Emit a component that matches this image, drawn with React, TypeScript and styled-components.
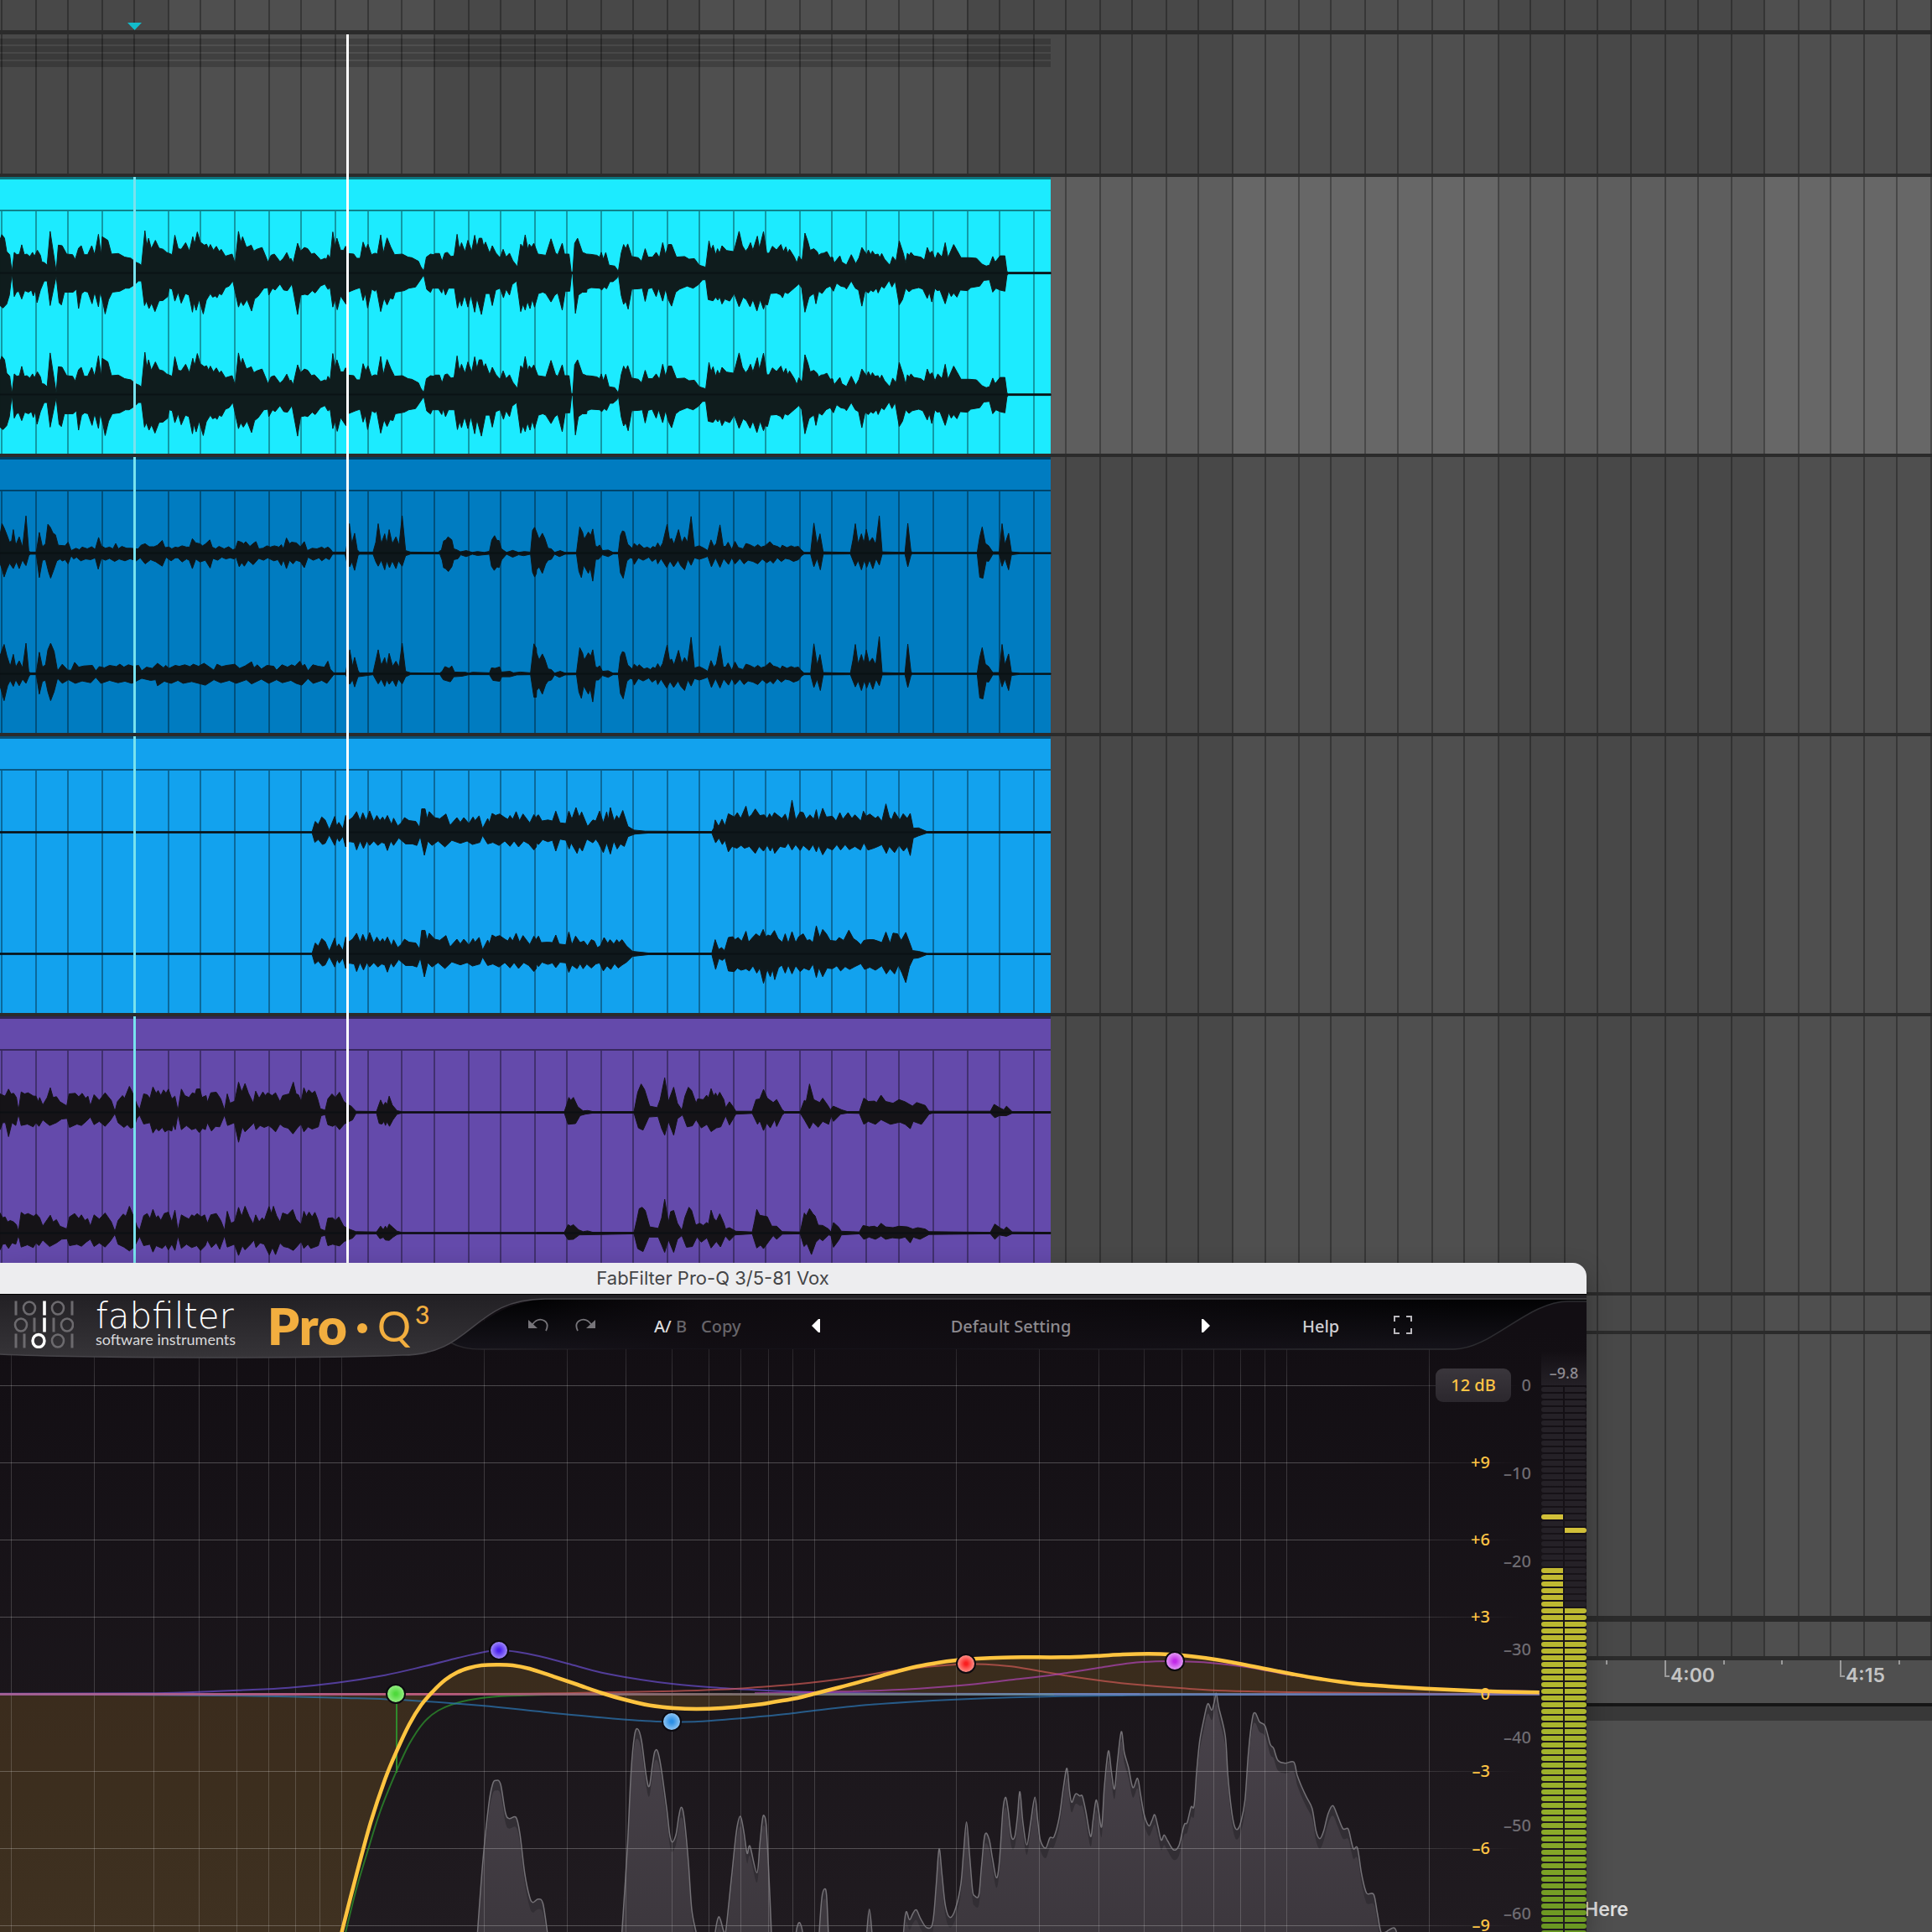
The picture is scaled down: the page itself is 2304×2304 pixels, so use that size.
import React from "react";
import styled, { createGlobalStyle } from "styled-components";

/* ---------- shared drawing helpers ---------- */

type Scale = { x0: number; sx: number; y0: number; sy: number };
type Pt = [number, number];

const parse = (text: string, s: Scale): Pt[] =>
  text
    .trim()
    .split(/\s*,\s*/)
    .map((pair) => {
      const [x, y] = pair.split(" ").map(Number);
      return [s.x0 + x / s.sx, (y - s.y0) / s.sy] as Pt;
    });

const fmt = (p: Pt) => `${p[0].toFixed(1)} ${p[1].toFixed(1)}`;
const line = (pts: Pt[]) => "M" + pts.map(fmt).join("L");

/* Catmull-Rom spline through the points */
const spline = (pts: Pt[]) => {
  let d = `M${fmt(pts[0])}`;
  for (let i = 0; i < pts.length - 1; i++) {
    const a = pts[Math.max(0, i - 1)];
    const b = pts[i];
    const c = pts[i + 1];
    const e = pts[Math.min(pts.length - 1, i + 2)];
    const c1: Pt = [b[0] + (c[0] - a[0]) / 6, b[1] + (c[1] - a[1]) / 6];
    const c2: Pt = [c[0] - (e[0] - b[0]) / 6, c[1] - (e[1] - b[1]) / 6];
    d += `C${fmt(c1)} ${fmt(c2)} ${fmt(c)}`;
  }
  return d;
};

type Piece = { scale: Scale; top: string; bottom: string };
const outline = (pieces: Piece[]) => {
  const top = pieces.flatMap((p) => parse(p.top, p.scale));
  const bottom = pieces.flatMap((p) => parse(p.bottom, p.scale)).reverse();
  return line([...top, ...bottom]) + "Z";
};

/* ---------- waveform data ---------- */

const leadVox: Piece[] = [
  {
    scale: { x0: 0, sx: 2.24, y0: 911, sy: 2.8 },
    top: "0 800,5 783,12 795,18 840,26 850,32 908,38 842,45 850,52 848,58 817,65 850,72 848,80 856,87 842,92 855,100 835,108 852,112 875,118 876,126 885,134 772,150 905,156 818,166 820,178 848,194 850,201 866,210 828,217 820,225 850,234 850,245 820,253 850,263 782,270 850,273 790,288 802,298 848,316 846,333 858,350 862,362 875,372 880,378 886,387 770,392 820,397 795,404 830,415 802,425 828,436 832,445 842,460 850,467 785,476 830,484 832,496 810,506 838,515 790,520 815,527 774,535 808,546 818,552 815,557 830,562 816,570 835,578 822,586 840,591 832,602 855,620 848,628 880,637 772,643 810,648 790,658 825,665 822,671 818,678 838,686 832,700 826,708 850,716 875,724 852,733 848,748 873,757 862,766 843,774 866,777 862,783 878,795 812,803 838,813 826,822 830,832 848,840 845,857 868,868 862,872 866,876 850,882 862,889 774,895 822,900 795,910 835,918 835,923 822,930 846,945 848,953 862,962 862,970 808,977 832,983 815,992 850,1002 845,1008 848,1017 784,1024 845,1034 794,1044 825,1054 850,1075 848,1090 858,1100 860,1118 872,1124 890,1132 904,1139 858,1150 848,1158 850,1163 846,1174 846,1181 872,1188 845,1195 842,1205 856,1213 854,1221 782,1227 832,1233 810,1242 840,1250 802,1260 838,1268 785,1274 825,1280 795,1287 795,1292 822,1297 808,1308 845,1315 820,1325 845,1336 860,1344 832,1352 858,1361 845,1370 870,1382 890,1391 815,1397 825,1403 784,1410 832,1414 815,1420 825,1426 812,1437 848,1458 852,1472 797,1484 845,1490 850,1502 812,1508 848,1520 848,1526 908,1530 908,1535 812,1543 795,1556 842,1567 848",
    bottom: "0 1020,8 1028,18 1015,25 985,32 914,38 990,44 975,50 972,58 998,66 970,76 975,84 968,89 988,94 968,99 1010,108 968,118 938,126 938,134 1020,150 922,158 1010,164 1018,172 975,195 975,204 965,210 1030,218 980,226 972,235 975,246 1014,253 975,263 1024,268 975,275 1010,281 1048,290 1000,300 975,320 972,335 962,345 962,360 950,370 938,378 938,386 1020,391 1005,398 1030,405 1012,414 1040,425 1004,435 1003,448 990,452 962,460 965,467 1005,476 975,484 1012,495 980,505 985,514 1042,518 1010,524 1036,532 1000,543 1048,551 1002,562 980,568 992,575 988,580 994,585 980,592 984,602 960,612 955,622 938,637 1025,643 1005,650 1020,660 1000,672 1038,680 998,690 988,705 962,716 960,718 985,728 962,735 968,748 948,758 968,768 970,780 948,795 1050,803 985,815 982,822 985,834 970,842 978,856 955,868 948,876 966,882 960,889 1025,895 1000,901 1034,910 988,924 1015,930 975,950 965,962 960,970 1003,976 980,982 1028,993 965,1002 972,1006 965,1017 1040,1026 995,1034 1018,1042 995,1050 998,1056 975,1080 970,1092 962,1110 958,1120 940,1132 918,1140 966,1150 976,1155 962,1172 962,1180 978,1184 960,1190 985,1198 962,1214 962,1222 1028,1228 1000,1233 1022,1241 985,1250 1025,1258 985,1268 1042,1274 995,1286 1050,1297 980,1308 980,1315 1020,1324 968,1336 962,1345 994,1352 965,1361 985,1368 950,1380 938,1391 1040,1397 1015,1403 1035,1409 1005,1416 1030,1422 998,1428 1025,1438 980,1450 975,1458 980,1472 1008,1482 985,1490 978,1502 1035,1510 972,1522 972,1527 914,1530 914,1537 1046,1545 985,1556 975,1567 975",
  },
  {
    scale: { x0: 640, sx: 2.063, y0: 351, sy: 2.8 },
    top: "124 288,134 289,148 292,155 298,159 282,164 305,170 283,178 325,192 328,201 345,208 285,214 256,219 270,224 254,234 296,250 300,258 312,267 270,274 298,285 298,294 282,302 300,310 250,317 290,324 256,332 256,344 298,364 296,375 305,388 303,400 325,416 332,424 244,429 275,434 258,440 290,445 270,450 285,456 260,467 276,485 280,498 212,506 260,514 278,520 268,526 250,532 275,543 228,548 268,558 213,566 285,572 285,580 262,590 274,601 256,607 280,613 264,618 285,622 272,634 298,640 318,645 295,653 310,660 218,667 245,673 275,682 270,690 280,694 292,700 286,706 285,714 280,722 300,728 298,732 318,746 294,751 315,762 324,774 290,785 320,793 300,800 266,812 290,816 274,822 290,826 278,832 290,840 288,844 300,849 286,856 305,869 325,876 296,884 312,892 244,902 285,908 318,912 285,917 292,921 282,928 294,945 298,954 308,961 266,967 285,973 278,980 305,987 282,997 298,1005 250,1012 300,1026 256,1034 275,1044 300,1065 300,1082 302,1096 322,1106 328,1114 325,1122 296,1128 315,1140 294,1152 294,1157 345,1160 349,1265 349",
    bottom: "124 405,134 400,155 402,160 408,166 398,172 404,180 380,188 380,198 368,201 355,208 425,214 456,219 445,225 472,234 405,250 404,260 402,267 446,274 404,284 400,294 430,300 402,310 445,317 405,324 440,332 462,342 415,352 405,370 395,385 402,398 390,408 374,416 374,422 440,434 444,440 432,446 442,450 430,456 455,463 438,475 445,486 420,498 464,508 432,516 440,525 464,532 440,542 478,550 440,558 472,562 455,568 458,575 420,590 418,600 424,605 434,610 415,618 420,635 400,645 388,652 400,660 482,670 432,676 425,682 420,687 454,694 412,702 420,712 402,722 395,730 412,738 385,748 395,758 398,762 405,774 378,784 402,792 408,800 462,808 410,816 418,822 408,828 414,836 402,840 418,848 395,855 402,867 376,874 398,882 378,892 458,900 440,908 402,916 414,924 405,940 400,950 405,961 436,966 415,972 448,980 402,985 410,992 408,1005 454,1014 412,1020 430,1026 418,1034 432,1042 408,1060 410,1068 400,1090 395,1100 376,1114 374,1122 415,1130 402,1140 408,1152 412,1157 360,1160 354,1265 354",
  },
];

const doublesTail: Piece = {
  scale: { x0: 640, sx: 2.063, y0: 1284, sy: 2.8 },
  top: "0 1215,6 1238,14 1218,20 1235,28 1268,36 1270,44 1282,58 1276,70 1282,98 1282,102 1240,106 1197,113 1215,117 1238,127 1214,133 1225,138 1204,145 1262,150 1263,155 1257,162 1276,176 1274,188 1282,201 1282,206 1225,211 1210,216 1213,224 1255,230 1262,235 1268,240 1252,248 1262,252 1254,264 1268,272 1264,280 1270,286 1262,292 1266,298 1250,304 1265,310 1250,321 1188,327 1240,332 1235,338 1255,349 1206,357 1250,364 1230,371 1248,380 1162,388 1265,400 1260,412 1268,421 1276,429 1240,436 1262,442 1252,451 1190,459 1262,465 1262,471 1248,480 1272,488 1245,496 1265,508 1270,515 1252,524 1256,536 1264,544 1256,552 1264,562 1260,574 1246,582 1258,592 1262,600 1268,604 1258,616 1266,626 1260,634 1264,644 1262,650 1272,658 1282,674 1282,682 1184,690 1255,697 1220,705 1280,772 1282,778 1240,784 1186,791 1252,799 1220,805 1250,811 1205,818 1248,826 1232,834 1255,843 1160,850 1280,906 1282,913 1185,921 1278,925 1282,1084 1282,1090 1230,1096 1197,1104 1252,1112 1260,1122 1280,1138 1280,1145 1186,1152 1255,1161 1218,1168 1280,1190 1283,1265 1283",
  bottom: "0 1340,6 1330,14 1352,22 1320,28 1308,36 1305,44 1288,56 1296,70 1288,98 1287,104 1345,110 1366,116 1325,127 1352,132 1335,138 1378,145 1305,152 1305,162 1290,176 1296,188 1287,201 1287,206 1350,213 1368,222 1310,230 1300,236 1302,240 1322,250 1300,262 1308,276 1298,284 1312,294 1302,298 1320,306 1302,320 1332,328 1310,337 1330,348 1308,354 1325,364 1340,372 1305,380 1325,388 1300,400 1305,412 1300,421 1295,430 1330,440 1300,451 1332,460 1302,472 1322,480 1300,488 1320,500 1302,510 1320,520 1308,532 1312,544 1320,555 1304,566 1316,575 1308,582 1318,592 1300,602 1312,612 1302,622 1305,632 1312,644 1306,652 1292,658 1287,674 1287,682 1330,690 1302,698 1340,705 1288,772 1287,784 1328,791 1308,799 1340,806 1308,812 1332,819 1306,827 1336,835 1302,843 1324,850 1288,906 1287,913 1330,921 1290,925 1286,1084 1286,1090 1365,1098 1368,1106 1310,1112 1312,1122 1288,1138 1288,1145 1328,1152 1302,1161 1340,1168 1290,1190 1286,1265 1286",
};

const doublesLeft: Piece[] = [
  {
    scale: { x0: 0, sx: 2.45, y0: 276, sy: 2.8 },
    top: "0 215,6 178,12 192,20 215,28 240,34 235,39 198,46 250,56 222,66 256,76 152,84 268,88 273,106 273,115 207,124 255,133 245,140 180,147 190,155 210,162 215,170 250,190 252,199 240,208 268,222 260,232 265,240 256,255 262,268 255,278 264,288 224,296 252,308 260,320 256,330 262,338 244,346 262,356 254,370 260,384 260,396 262,404 262,412 250,424 245,436 255,450 255,460 250,474 234,482 258,494 256,502 262,512 256,520 258,532 252,545 256,554 256,562 228,572 242,584 245,592 252,600 246,613 232,620 256,630 262,640 254,655 262,668 255,680 265,688 262,695 236,705 240,712 245,718 238,730 254,742 242,748 238,756 262,768 260,780 252,790 256,802 252,815 256,822 248,828 262,837 226,846 245,852 240,866 242,878 255,889 238,898 268,912 260,926 262,940 256,948 262,958 256,965 262,972 273,1010 273,1014 245,1021 178,1028 245,1036 210,1044 265,1050 273,1090 273,1098 240,1105 178,1114 245,1124 212,1130 245,1137 198,1146 245,1157 222,1166 250,1175 152,1185 268,1200 273,1280 274,1290 265,1296 236,1303 232,1309 222,1320 232,1326 262,1336 266,1345 272,1362 268,1380 274,1395 271,1415 274,1430 270,1437 232,1445 218,1452 234,1458 234,1465 262,1480 274,1498 267,1515 274,1532 271,1550 273,1556 200,1562 190,1567 205",
    bottom: "0 310,6 330,12 356,20 330,28 310,39 328,48 305,56 328,66 298,72 312,76 318,84 285,88 280,106 280,115 358,124 300,133 298,142 340,148 360,156 335,166 302,176 296,182 303,190 298,199 312,208 285,215 296,224 290,236 302,250 296,265 298,278 292,287 330,296 294,308 300,320 294,335 304,348 296,365 302,380 295,398 302,410 292,424 312,440 298,455 305,474 320,485 290,500 302,512 292,520 292,532 306,545 296,553 300,562 328,572 296,584 306,600 300,614 326,622 294,636 300,648 290,660 296,672 292,684 296,690 290,699 322,706 308,714 320,725 300,740 315,756 294,770 300,782 292,800 302,812 298,822 318,828 298,837 328,846 300,856 312,865 300,878 305,889 325,900 290,915 300,932 292,940 302,952 292,962 298,972 280,1008 280,1014 310,1022 322,1028 305,1036 334,1046 285,1050 280,1090 280,1098 305,1105 320,1114 300,1124 332,1130 302,1138 325,1146 302,1157 328,1164 302,1175 320,1185 285,1200 279,1285 279,1292 300,1296 325,1302 328,1310 338,1320 322,1326 298,1338 295,1346 282,1362 288,1380 280,1395 284,1430 280,1436 320,1444 334,1452 322,1458 325,1466 298,1480 280,1498 290,1515 282,1530 285,1550 280,1556 340,1562 356,1567 345",
  },
  doublesTail,
];

const doublesRight: Piece[] = [
  {
    scale: { x0: 0, sx: 2.45, y0: 680, sy: 2.8 },
    top: "0 620,12 582,20 620,30 655,39 615,46 658,56 637,66 660,76 578,84 672,88 677,106 677,115 608,124 658,133 650,140 600,148 578,158 605,168 670,182 648,198 668,208 668,218 642,230 658,245 654,270 652,280 670,290 656,305 660,320 652,340 656,350 648,362 658,375 650,390 655,405 652,414 670,428 658,445 662,460 645,478 660,484 652,494 662,512 652,524 655,540 650,555 656,565 648,580 655,596 645,610 656,625 668,634 648,648 656,662 652,676 650,686 648,700 662,716 654,735 640,742 660,752 650,764 664,780 652,800 655,808 668,824 650,840 658,852 650,862 655,876 638,884 655,890 648,900 670,914 650,930 655,948 658,958 638,965 665,975 677,1010 677,1022 600,1030 655,1036 625,1046 668,1050 677,1090 677,1105 600,1114 652,1124 626,1130 655,1137 612,1147 655,1157 638,1166 658,1175 578,1185 672,1200 677,1285 678,1292 672,1300 656,1312 662,1320 654,1328 674,1345 675,1360 675,1370 678,1380 675,1430 677,1436 660,1446 662,1460 657,1465 674,1490 672,1500 677,1520 674,1550 677,1560 580,1567 595",
    bottom: "0 720,12 770,22 720,30 702,39 722,46 700,56 720,66 698,76 712,84 690,88 683,106 683,115 748,124 705,133 702,140 740,148 770,158 740,168 695,182 712,200 700,220 712,240 704,265 710,280 692,295 712,320 702,345 710,365 705,385 712,414 695,440 702,455 700,460 720,480 705,500 712,520 702,535 712,560 706,580 712,600 718,625 700,645 710,670 702,690 712,720 700,735 714,764 698,785 712,808 700,825 710,850 702,865 712,882 718,900 696,915 712,940 702,955 712,975 683,1010 683,1022 715,1030 700,1036 724,1046 690,1090 683,1105 714,1114 698,1124 722,1130 700,1137 715,1147 700,1157 722,1164 698,1175 714,1185 690,1200 682,1285 682,1295 700,1316 707,1326 690,1350 688,1370 683,1430 683,1440 702,1460 705,1466 690,1490 690,1510 684,1550 683,1560 758,1567 758",
  },
  doublesTail,
];

const pads: Piece[] = [
  {
    scale: { x0: 0, sx: 2.45, y0: 1211, sy: 2.8 },
    top: "0 1209,912 1209,921 1175,930 1185,940 1160,950 1170,962 1202,978 1158,984 1190,990 1178,1002 1200,1010 1155,1020 1170,1030 1162,1042 1142,1052 1172,1060 1146,1070 1172,1080 1140,1092 1175,1101 1155,1110 1172,1118 1160,1124 1172,1132 1155,1144 1185,1150 1164,1162 1190,1172 1180,1182 1162,1195 1172,1215 1175,1226 1195,1232 1133,1242 1133,1248 1165,1254 1142,1270 1162,1285 1166,1303 1150,1315 1188,1335 1162,1345 1178,1355 1162,1370 1182,1382 1160,1388 1172,1400 1156,1410 1198,1425 1165,1430 1178,1438 1148,1448 1155,1460 1150,1475 1162,1484 1168,1490 1155,1498 1168,1508 1142,1518 1172,1528 1150,1548 1180,1560 1152,1567 1165",
    bottom: "0 1213,912 1213,920 1245,930 1235,942 1252,950 1248,962 1220,978 1255,985 1228,991 1242,1002 1225,1010 1260,1020 1242,1035 1245,1042 1270,1052 1240,1062 1265,1072 1240,1080 1255,1092 1240,1104 1255,1115 1245,1124 1248,1132 1272,1142 1240,1150 1255,1165 1230,1185 1250,1205 1250,1218 1255,1228 1225,1240 1288,1250 1240,1262 1255,1280 1240,1300 1260,1320 1238,1345 1248,1365 1240,1380 1252,1402 1245,1410 1222,1425 1250,1440 1245,1458 1255,1475 1240,1490 1258,1502 1240,1515 1260,1530 1240,1545 1250,1560 1270,1567 1260",
  },
  {
    scale: { x0: 640, sx: 2.24, y0: 306, sy: 2.306 },
    top: "0 262,5 258,14 275,30 272,42 275,51 248,62 280,78 282,86 248,94 270,105 238,114 265,120 250,136 290,150 272,158 275,168 248,178 280,187 250,191 272,197 238,207 275,214 260,220 270,230 246,244 290,260 300,290 303,468 304,473 295,477 272,486 290,495 270,503 288,512 255,528 264,536 252,545 268,559 234,566 265,574 258,584 242,596 260,608 258,616 268,622 255,628 265,635 252,655 268,664 256,672 278,682 218,692 272,704 250,712 252,720 270,730 258,740 270,747 244,753 275,764 240,774 264,790 262,800 275,810 252,818 270,832 252,842 268,850 258,866 275,873 248,880 262,890 256,905 268,912 262,922 276,933 228,942 264,948 272,956 250,970 272,979 255,990 268,998 254,1006 295,1020 294,1042 304,1373 304",
    bottom: "0 335,5 340,16 326,30 332,42 328,51 358,62 325,78 328,87 352,92 335,108 364,114 345,122 358,134 325,150 335,158 325,165 335,178 362,187 335,197 366,206 330,215 352,224 338,234 345,244 318,262 311,300 308,468 308,478 335,487 322,496 340,503 328,512 360,522 345,535 350,546 342,555 350,568 345,584 364,594 345,606 358,616 342,624 358,630 345,636 364,650 345,664 348,672 335,682 355,692 340,704 356,712 342,728 356,738 340,747 360,753 342,764 368,776 348,790 355,802 340,812 355,824 340,835 354,850 345,865 355,874 335,885 355,900 350,912 345,922 340,934 364,942 345,956 362,968 342,980 358,990 345,998 370,1006 322,1020 316,1042 308,1373 308",
  },
];

const padsRight: Piece[] = [
  pads[0],
  {
    scale: { x0: 640, sx: 2.24, y0: 637, sy: 2.306 },
    top: "0 595,5 588,12 606,30 605,42 606,51 585,60 610,78 612,86 577,94 612,104 588,116 606,126 602,136 615,146 598,154 602,162 620,170 615,180 592,190 608,196 598,206 610,214 598,220 606,228 598,240 615,256 630,300 635,468 635,477 598,486 625,494 620,502 628,512 592,524 590,530 598,538 592,548 602,559 575,566 605,574 595,586 582,596 590,605 570,612 590,618 585,625 588,635 573,645 595,656 605,664 582,672 608,682 576,692 606,700 590,712 582,722 600,730 598,738 606,747 560,756 592,764 570,774 582,784 600,800 602,808 592,820 600,834 572,846 595,856 602,866 612,874 600,886 598,900 598,912 602,922 606,933 577,944 608,952 580,964 582,974 600,986 578,996 605,1004 628,1020 630,1042 636,1373 636",
    bottom: "0 665,5 672,14 660,30 666,42 662,51 675,62 660,78 662,86 688,94 668,108 678,116 664,124 678,134 665,146 676,158 665,168 662,178 684,188 670,198 680,208 664,218 676,228 668,240 660,256 644,300 639,468 639,478 680,487 650,496 655,503 648,512 684,528 686,536 676,546 682,559 678,568 684,578 670,588 690,596 676,606 718,616 680,624 700,630 680,636 708,646 675,655 668,664 690,672 668,682 692,692 670,704 686,714 676,728 682,738 665,747 702,754 675,764 700,776 676,790 678,802 670,812 684,824 672,836 680,850 672,866 664,876 680,890 674,905 682,922 670,934 692,944 678,956 692,966 668,976 690,986 716,996 672,1006 650,1020 648,1042 639,1373 639",
  },
];

const adlibHead: Piece = {
  scale: { x0: 0, sx: 2.45, y0: 378, sy: 3 },
  top: "0 312,15 320,25 295,32 312,40 310,48 325,54 372,62 305,72 312,82 308,98 320,105 320,112 340,116 325,125 352,138 325,147 290,155 325,165 322,175 340,195 355,202 312,220 310,230 322,240 310,250 328,257 320,264 355,275 315,290 335,307 308,325 335,336 374,343 340,358 318,364 328,378 285,388 310,400 350,408 368,420 312,430 315,438 328,447 287,456 310,462 300,470 318,478 298,485 310,492 295,502 330,511 320,520 372,530 295,540 318,552 325,562 308,570 312,574 295,584 294,590 325,602 318,606 342,616 308,632 306,645 330,656 370,664 312,672 345,686 338,697 270,706 305,716 275,726 310,740 345,747 302,757 328,768 305,775 318,782 308,795 318,805 308,818 340,826 318,845 312,857 270,865 312,872 315,880 340,888 290,895 312,902 298,912 310,920 302,928 330,936 365,950 370,958 330,970 312,980 325,992 306,1004 338,1015 350,1025 355,1040 374,1100 375,1112 334,1120 355,1126 342,1131 350,1137 320,1146 352,1160 372,1175 376,1567 376",
  bottom: "0 440,8 415,16 415,25 465,35 415,46 425,54 385,62 425,80 420,97 430,105 415,114 428,125 405,145 425,165 415,180 402,196 400,203 432,225 420,238 425,252 410,264 395,275 422,290 410,307 428,322 408,336 382,345 415,362 432,372 422,382 435,392 430,400 400,408 388,420 420,438 415,447 452,456 435,464 445,474 432,482 448,492 440,502 445,506 420,512 440,520 385,530 440,545 425,560 440,572 435,582 450,592 435,600 440,606 415,618 445,630 428,642 430,656 388,665 425,685 415,697 485,708 430,716 448,732 428,742 415,748 440,760 425,772 432,785 425,795 435,805 448,818 420,828 430,842 435,856 455,870 432,880 420,888 448,900 430,912 438,930 430,938 390,950 386,958 422,972 428,980 422,992 440,1006 420,1018 412,1030 405,1040 382,1100 381,1108 418,1116 420,1122 410,1126 425,1131 412,1138 428,1148 405,1160 385,1175 380,1567 380",
};

const adlibsLeft: Piece[] = [
  adlibHead,
  {
    scale: { x0: 640, sx: 2.24, y0: 1075, sy: 2.306 },
    top: "0 1073,74 1073,80 1055,86 1034,91 1042,98 1034,110 1060,124 1071,136 1070,150 1073,260 1073,270 1020,279 997,288 1012,302 1058,322 1062,330 1040,342 980,352 1045,366 1006,376 1050,388 1068,396 1030,405 1006,414 1015,426 1050,430 1038,445 1040,454 1028,459 1035,466 1010,473 1030,478 1022,483 1032,489 1020,500 1040,505 1062,515 1046,525 1060,532 1072,576 1072,586 1040,596 1038,606 1012,616 1036,632 1048,641 1040,656 1068,662 1073,704 1073,715 1042,720 1045,729 997,740 1040,756 1048,764 1036,778 1056,785 1068,792 1058,815 1068,830 1073,862 1073,874 1036,886 1045,902 1044,908 1048,920 1028,932 1045,952 1050,968 1040,984 1046,1004 1058,1015 1048,1038 1056,1048 1072,1212 1072,1222 1053,1236 1062,1248 1068,1255 1058,1270 1073,1373 1073",
    bottom: "0 1077,74 1077,84 1108,104 1106,116 1084,130 1080,150 1077,260 1077,272 1118,284 1124,300 1088,324 1086,334 1120,342 1138,352 1100,366 1138,376 1092,390 1082,402 1115,416 1112,426 1095,440 1118,455 1108,466 1128,480 1118,492 1115,505 1085,515 1110,532 1080,576 1078,590 1108,596 1098,606 1125,615 1105,624 1118,636 1095,641 1114,656 1082,662 1077,704 1077,715 1095,729 1120,738 1102,752 1116,764 1100,780 1108,787 1085,793 1100,812 1080,830 1077,862 1078,874 1108,886 1100,905 1108,920 1095,945 1108,970 1102,984 1108,998 1120,1006 1100,1028 1108,1048 1080,1058 1077,1212 1077,1224 1090,1236 1084,1255 1084,1270 1077,1373 1077",
  },
];

const adlibsRight: Piece[] = [
  {
    scale: { x0: 0, sx: 2.45, y0: 810, sy: 3 },
    top: "0 738,8 755,15 752,22 770,30 765,40 770,48 780,54 804,62 736,72 745,82 740,98 750,106 742,116 755,125 785,138 762,147 746,155 770,165 762,175 785,195 795,203 752,218 740,230 758,238 745,248 765,256 758,264 785,275 745,290 760,307 738,325 770,336 804,345 765,360 742,368 750,378 714,390 750,400 785,408 800,420 748,430 740,438 758,447 725,456 755,462 748,470 765,480 740,492 735,502 770,511 728,520 800,530 745,540 752,552 760,560 745,568 750,576 740,588 752,598 745,606 775,616 745,632 740,645 765,656 800,664 732,675 775,686 768,697 718,706 750,716 714,728 750,740 778,747 745,757 770,766 755,772 765,786 715,793 740,799 714,808 748,818 770,826 738,840 745,855 726,865 760,880 780,888 732,895 752,903 735,912 752,920 736,928 760,936 795,950 802,958 757,972 755,980 765,990 752,1004 785,1018 795,1040 805,1100 806,1112 785,1120 798,1126 785,1131 795,1137 778,1148 790,1160 803,1175 808,1567 808",
    bottom: "0 870,8 850,16 848,25 865,35 845,46 850,54 818,62 860,80 852,97 862,105 845,114 855,125 835,145 858,165 845,180 832,196 830,203 855,225 850,238 857,252 842,264 832,275 858,290 845,307 860,322 840,336 815,345 850,362 860,378 874,392 860,408 822,420 855,438 850,447 878,456 855,474 865,484 852,492 870,502 850,511 872,520 820,530 865,545 850,560 862,575 855,586 872,600 855,606 835,618 862,632 845,642 868,656 820,664 860,685 850,697 890,708 855,716 870,732 850,742 835,748 862,760 845,772 850,787 888,796 862,805 887,818 845,828 858,842 862,857 872,870 855,880 840,888 865,900 850,908 865,930 855,938 822,950 818,958 855,972 850,992 856,1006 840,1030 828,1040 814,1100 813,1110 830,1120 825,1126 835,1137 836,1148 825,1160 815,1175 812,1567 812",
  },
  {
    scale: { x0: 640, sx: 2.24, y0: 1407, sy: 2.306 },
    top: "0 1405,74 1405,84 1384,91 1388,98 1384,112 1398,124 1403,136 1401,150 1405,260 1405,268 1370,274 1340,282 1336,290 1345,302 1390,325 1394,334 1365,342 1314,352 1378,358 1348,366 1345,376 1380,388 1400,396 1365,407 1336,414 1345,425 1385,436 1380,445 1386,454 1378,459 1382,466 1344,473 1366,480 1374,489 1354,500 1380,505 1396,515 1392,532 1402,576 1404,582 1375,588 1342,596 1358,616 1362,628 1388,641 1388,656 1403,704 1404,715 1352,720 1360,729 1340,738 1354,744 1360,752 1385,764 1386,780 1396,786 1404,793 1378,806 1390,814 1402,862 1404,872 1386,888 1390,902 1388,910 1392,920 1380,932 1390,952 1392,968 1388,990 1390,1005 1396,1018 1392,1038 1396,1048 1403,1212 1405,1224 1382,1240 1394,1248 1398,1255 1390,1270 1404,1373 1405",
    bottom: "0 1409,74 1409,84 1425,98 1424,114 1412,260 1409,270 1450,284 1458,300 1418,325 1418,334 1440,342 1460,352 1425,366 1460,376 1424,388 1414,400 1446,416 1444,428 1418,440 1432,455 1420,466 1448,480 1430,491 1445,504 1415,515 1428,530 1412,576 1409,588 1448,598 1440,606 1450,620 1430,632 1414,641 1424,656 1410,704 1409,714 1444,722 1436,734 1466,746 1432,756 1422,764 1428,780 1412,786 1414,793 1446,808 1425,814 1412,862 1409,874 1424,888 1418,905 1424,920 1415,932 1424,950 1420,970 1422,984 1418,998 1434,1006 1418,1024 1424,1048 1411,1212 1409,1224 1424,1236 1412,1255 1416,1270 1409,1373 1409",
  },
];

/* ---------- arrangement data ---------- */

const BEATS = [
  2, 43, 81, 122, 160, 201, 239, 280, 321, 359, 400, 439, 479, 518, 559, 597, 638, 676, 717, 755, 796, 834, 875, 913,
  954, 992, 1033, 1072, 1113, 1154, 1192, 1233, 1271, 1312, 1350, 1391, 1429, 1470, 1509, 1549, 1587, 1628, 1667, 1708,
  1746, 1787, 1825, 1866, 1905, 1945, 1986, 2025, 2065, 2104, 2145, 2183, 2223, 2262, 2303,
];
const LIGHT_BANDS: Pt[] = [
  [201, 518],
  [835, 1153],
  [1470, 1787],
  [2104, 2422],
];

type Track = { height: number; color: string; ink: string; active?: boolean; channels: Piece[][] };
const TRACKS: Track[] = [
  { height: 330, color: "#1cebff", ink: "#0f1c1d", active: true, channels: [leadVox, leadVox] },
  { height: 329, color: "#007cc1", ink: "#0e171b", channels: [doublesLeft, doublesRight] },
  { height: 330, color: "#12a2ee", ink: "#0f181c", channels: [pads, padsRight] },
  { height: 329, color: "#644aab", ink: "#151317", channels: [adlibsLeft, adlibsRight] },
];

/* ---------- arrangement styles ---------- */

const GlobalStyle = createGlobalStyle`
  * { box-sizing: border-box; }
  body { margin: 0; background: #4f4f4f; }
  button { font: inherit; color: inherit; background: none; border: 0; padding: 0; cursor: pointer; }
`;

const Desktop = styled.div`
  position: relative;
  min-height: 100vh;
  overflow: hidden;
  display: flex;
  flex-direction: column;
  background: #4f4f4f;
  font-family: Inter, "Liberation Sans", sans-serif;
`;

const Lane = styled.section<{ $height: number; $rule: number; $active?: boolean }>`
  position: relative;
  display: grid;
  grid-template-rows: minmax(0, 1fr);
  flex: none;
  height: ${(p) => p.$height + p.$rule}px;
  border-bottom: ${(p) => p.$rule}px solid #2b2b2b;
  background: ${(p) => (p.$active ? "#5e5e5e" : "#484848")};
  > * {
    grid-area: 1 / 1;
  }
`;

const LaneGrid = styled.svg`
  display: block;
  width: 100%;
  height: 100%;
  min-width: 0;
`;

const Clip = styled.article<{ $color: string }>`
  width: 1253px;
  min-height: 0;
  display: flex;
  flex-direction: column;
  background: ${(p) => p.$color};
`;

const ClipTitle = styled.header`
  flex: none;
  height: 41px;
  border-top: 3px solid rgba(0, 0, 0, 0.5);
  border-bottom: 2px solid rgba(0, 0, 0, 0.45);
`;

const ClipBody = styled.div`
  flex: 1;
  min-height: 0;
  display: grid;
  grid-template-rows: minmax(0, 1fr) minmax(0, 1fr);
  > svg:first-child {
    grid-area: 1 / 1 / 3 / 2;
  }
`;

const ClipGrid = styled.svg`
  width: 100%;
  height: 100%;
`;

const Channel = styled.svg<{ $row: number }>`
  grid-area: ${(p) => p.$row} / 1;
  width: 100%;
  height: 100%;
  overflow: visible;
`;

const Locator = styled.i`
  position: absolute;
  top: 0;
  bottom: 0;
  left: 159px;
  width: 3px;
  background: #78e2ee;
`;

const LocatorFlag = styled.svg`
  align-self: end;
  margin-left: 152px;
`;

const Envelopes = styled.div`
  width: 1253px;
  display: flex;
  flex-direction: column;
  gap: 2px;
  padding-top: 5px;
`;

const Envelope = styled.i`
  height: 7px;
  background: rgba(0, 0, 0, 0.19);
`;

const Playhead = styled.i`
  position: absolute;
  top: 41px;
  bottom: 0;
  left: 413px;
  width: 3px;
  background: #fff;
`;

const Ruler = styled.div`
  flex: none;
  display: flex;
  height: 55px;
  padding-left: 1776px;
  overflow: hidden;
  border-bottom: 4px solid #161616;
  background: #4f4f4f;
`;

const RulerCell = styled.div`
  flex: none;
  width: 209px;
  display: grid;
  > * {
    grid-area: 1 / 1;
  }
`;

const RulerLabel = styled.span`
  padding: 4px 0 0 7px;
  font-size: 23px;
  line-height: 28px;
  font-weight: 600;
  color: #c4c4c4;
`;

const Gutter = styled.div`
  flex: none;
  height: 17px;
  background: #383838;
`;

const DropArea = styled.footer`
  flex: 1;
  display: flex;
  align-items: flex-end;
  padding: 0 0 12px 1889px;
  font-size: 23px;
  line-height: 30px;
  font-weight: 600;
  color: #dedede;
`;

/* ---------- plugin window styles ---------- */

const Window = styled.section`
  position: absolute;
  left: 0;
  top: 1506px;
  bottom: 0;
  width: 1892px;
  display: flex;
  flex-direction: column;
  overflow: hidden;
  border-top-right-radius: 16px;
  background: #171318;
`;

const WindowShadow = styled.i`
  position: absolute;
  left: 0;
  top: 1506px;
  bottom: 0;
  width: 1892px;
  border-top-right-radius: 16px;
  box-shadow: 0 12px 30px rgba(0, 0, 0, 0.3);
`;

const TitleBar = styled.h1`
  flex: none;
  margin: 0;
  height: 38px;
  padding-right: 192px;
  border-bottom: 1px solid #000;
  background: #ededef;
  color: #454547;
  text-align: center;
  font-size: 22px;
  line-height: 36px;
  font-weight: 400;
`;

const Plugin = styled.div`
  flex: 1;
  min-height: 0;
  display: grid;
  font-family: "Noto Sans", "Open Sans", sans-serif;
  font-size: 20px;
  line-height: 24px;
  font-weight: 500;
  > * {
    grid-area: 1 / 1;
    min-height: 0;
  }
`;

const Analyzer = styled.svg`
  display: block;
  width: 100%;
  height: 760px;
`;

const Surface = styled.div`
  display: flex;
  flex-direction: column;
  overflow: hidden;
`;

const Toolbar = styled.header`
  flex: none;
  height: 62px;
  display: grid;
  grid-template-columns: 629px 56px 95px 56px 132px 475px 110px 109px 1fr;
  align-items: center;
  justify-items: start;
  color: #67656a;
  > :not(:first-child) {
    margin-top: 14px;
  }
`;

const Brand = styled.div`
  display: flex;
  align-items: flex-start;
  height: 62px;
  padding: 7px 0 0 16px;
  font-family: Lato, sans-serif;
  font-weight: 400;
`;

const Wordmark = styled.div`
  display: flex;
  flex-direction: column;
  width: 231px;
  padding-left: 26px;
  color: #fff;
`;

const MakerName = styled.span`
  font-family: "DejaVu Sans", sans-serif;
  font-size: 42px;
  font-weight: 200;
  line-height: 38px;
`;

const MakerLine = styled.span`
  font-size: 18px;
  line-height: 16px;
  color: #d8d8da;
`;

const Product = styled.div`
  display: flex;
  align-items: center;
  gap: 12px;
  color: #f2ae3f;
`;

const ProductName = styled.span`
  font-size: 60px;
  line-height: 60px;
  font-weight: 800;
`;

const ProductDot = styled.i`
  width: 12px;
  height: 12px;
  margin-top: 6px;
  border-radius: 50%;
  background: #f2ae3f;
`;

const ProductLetter = styled.span`
  display: flex;
  font-size: 50px;
  line-height: 60px;
`;

const ProductVersion = styled.sup`
  font-size: 30px;
  line-height: 32px;
  font-weight: 500;
  margin-left: 5px;
`;

const Compare = styled.button`
  span {
    color: #dcdcde;
  }
`;

const Preset = styled.div`
  width: 100%;
  display: flex;
  align-items: center;
  justify-content: space-between;
  color: #8c8a8f;
`;

const Bright = styled.button`
  color: #cfced2 !important;
`;

const Scales = styled.div`
  flex: 1;
  min-height: 0;
  display: flex;
  justify-content: flex-end;
`;

const GainScale = styled.div`
  width: 90px;
  display: grid;
  grid-auto-rows: 92px;
  align-content: start;
  align-items: center;
  justify-items: end;
  color: #ffc445;
`;

const GainLabel = styled.span`
  padding-right: 25px;
`;

const RangeButton = styled.button`
  width: 90px;
  height: 40px;
  border-radius: 9px;
  background: linear-gradient(#3a363c, #2b272d) !important;
  color: #ffc445 !important;
`;

const LevelScale = styled.div`
  width: 24px;
  display: flex;
  flex-direction: column;
  align-items: flex-end;
  gap: 81px;
  padding-top: 34px;
  color: #6f6c72;
  white-space: nowrap;
`;

const Meter = styled.div`
  width: 54px;
  margin-left: 12px;
  display: flex;
  flex-direction: column;
`;

const Readout = styled.output`
  flex: none;
  height: 46px;
  margin-bottom: 2px;
  padding-top: 19px;
  text-align: center;
  font-size: 18px;
  color: #8f8c92;
  background: linear-gradient(transparent 10%, #242026);
`;

const Columns = styled.div`
  display: grid;
  grid-template-columns: 1fr 1fr;
  gap: 2px;
`;

const Column = styled.div<{ $side: "left" | "right" }>`
  display: grid;
  grid-auto-rows: 6px;
  gap: 2px;
  i {
    border-radius: ${(p) => (p.$side === "left" ? "3px 0 0 3px" : "0 3px 3px 0")};
  }
`;

/* ---------- arrangement ---------- */

const Grid = ({ lift = 0.042 }: { lift?: number }) => (
  <LaneGrid aria-hidden>
    {LIGHT_BANDS.map(([a, b]) => (
      <rect key={a} x={a} width={b - a} height="100%" fill="#fff" opacity={lift} />
    ))}
    {BEATS.map((x) => (
      <rect key={x} x={x - 1} width={2} height="100%" fill="#000" opacity={0.3} />
    ))}
  </LaneGrid>
);

const Wave = ({ pieces, ink, row }: { pieces: Piece[]; ink: string; row: number }) => (
  <Channel $row={row} aria-hidden>
    <g transform="translate(0 73.5)">
      <path d={outline(pieces)} fill={ink} stroke={ink} strokeWidth={1} strokeLinejoin="round" />
      <rect y={-1} width={1253} height={2} fill="#060d10" opacity={0.6} />
    </g>
  </Channel>
);

const TrackLane = ({ track }: { track: Track }) => (
  <Lane $height={track.height} $rule={4} $active={track.active}>
    <Grid lift={track.active ? 0.06 : undefined} />
    <Clip $color={track.color}>
      <ClipTitle />
      <ClipBody>
        <ClipGrid aria-hidden>
          {BEATS.filter((x) => x < 1253).map((x) => (
            <rect key={x} x={x - 1} width={2} height="100%" fill="#000" opacity={0.35} />
          ))}
        </ClipGrid>
        {track.channels.map((pieces, i) => (
          <Wave key={i} pieces={pieces} ink={track.ink} row={i + 1} />
        ))}
      </ClipBody>
    </Clip>
    <Locator />
  </Lane>
);

const RulerMark = ({ label }: { label?: string }) => (
  <RulerCell>
    <svg width={209} height={20} aria-hidden>
      <path d="M1 0V19H6M71 0V5M140 0V5" fill="none" stroke="#9b9b9b" strokeWidth={2} />
    </svg>
    {label && <RulerLabel>{label}</RulerLabel>}
  </RulerCell>
);

/* ---------- equaliser drawing ---------- */

const A: Scale = { x0: 0, sx: 1.742, y0: -1068, sy: 3 };
const B: Scale = { x0: 900, sx: 1.96, y0: -1068, sy: 3 };

const totalPts: Pt[] = [
  ...parse("703 1262,710 1212,740 1010,770 820,800 665,824 565,850 470,875 400,900 350,925 310,950 283,975 267,1000 258,1033 256,1065 258,1100 270,1150 298,1200 327,1250 357,1300 382,1350 401,1400 411,1447 414,1500 411", A),
  ...parse("0 400,50 388,100 375,138 360,200 336,260 311,320 285,380 262,430 248,470 240,520 234,580 230,640 229,720 229,800 224,860 219,920 217,980 220,1030 227,1080 238,1140 254,1200 272,1260 290,1320 306,1400 323,1480 333,1568 341,1700 350,1834 355", B),
];

const BANDS: { color: string; pts: Pt[] }[] = [
  {
    color: "#6b4fd0",
    pts: [
      ...parse("0 359,300 358,400 354,500 347,600 338,700 320,800 293,880 262,950 232,1000 212,1036 204,1075 210,1120 225,1180 252,1250 284,1320 306,1400 325,1480 337", A),
      ...parse("0 346,60 350,200 356,400 359,900 360", B),
    ],
  },
  {
    color: "#2d9a2d",
    pts: [
      ...parse("710 1262,718 1212,740 1060,765 915,790 780,824 635,850 540,880 463,910 420,950 392,1000 375,1060 367,1120 364,1200 362,1500 361", A),
      ...parse("0 362,700 362", B),
    ],
  },
  {
    color: "#2c79b8",
    pts: [
      ...parse("0 361,300 364,450 366,600 370,720 375,850 383,1000 402,1130 425,1250 445,1340 457,1395 460,1450 459,1520 450", A),
      ...parse("0 443,80 431,160 416,260 400,360 389,470 380,600 373,720 368,850 366,1000 364,1834 362", B),
    ],
  },
  {
    color: "#cf5a56",
    pts: [
      ...parse("0 361,1000 360,1250 355,1400 350,1500 344", A),
      ...parse("0 337,80 328,160 315,240 298,320 278,400 264,450 257,493 254,540 254,600 262,660 277,740 298,820 315,900 328,1000 340,1100 349,1250 354,1568 359,1834 361", B),
    ],
  },
  {
    color: "#b044b8",
    pts: parse("0 358,200 352,350 344,480 330,600 310,700 292,800 268,880 250,940 244,1000 244,1060 248,1150 264,1250 292,1350 314,1450 328,1568 341,1834 352", B),
  },
];

const SPECTRUM: Pt[][] = [
  parse("990 1262,992 1212,1003 960,1015 760,1023 685,1030 670,1040 683,1050 785,1058 806,1072 802,1080 860,1090 1000,1100 1085,1107 1106,1118 1094,1128 1110,1137 1212,1140 1262", A),
  parse("1290 1262,1292 1212,1303 920,1311 640,1318 510,1325 486,1333 530,1343 660,1349 690,1355 620,1360 568,1366 565,1373 620,1385 770,1391 860,1396 890,1404 865,1410 800,1415 766,1421 800,1430 960,1437 1130,1446 1212,1450 1262", A),
  [
    ...parse("1484 1262,1486 1212,1492 1160,1497 1170,1504 1212,1508 1205,1520 1010,1530 850,1538 798,1545 850,1552 930,1558 905", A),
    ...parse("5 1000,12 900,18 810,22 796,27 830,33 1000,39 1212,40 1262", B),
  ],
  parse("94 1262,97 1212,101 1185,106 1180,112 1212,115 1262", B),
  parse("150 1262,151 1212,157 1090,163 1058,168 1080,172 1212,173 1262", B),
  parse("260 1262,262 1212,268 1130,274 1212,276 1262", B),
  parse("347 1262,348 1212,354 1140,362 1168,370 1145,378 1133,388 1165,402 1196,416 1180,424 1050,431 915,438 1010,446 1120,457 1160,470 1125,482 1040,488 930,495 818,502 930,509 1060,514 1082,524 1080,530 980,538 865,548 880,556 950,565 1018,572 960,580 780,586 730,592 770,600 870,608 870,614 800,620 710,627 820,636 900,645 820,655 730,662 820,668 885,680 912,690 875,700 870,712 800,722 690,730 626,736 710,741 748,750 718,760 725,766 726,774 780,785 870,791 810,798 740,804 780,811 835,817 700,823 600,828 565,834 640,841 700,848 600,857 495,864 570,874 625,884 695,895 662,902 720,910 790,921 832,928 815,935 792,942 830,950 883,957 865,965 885,979 918,991 905,1000 850,1005 825,1011 820,1020 765,1027 760,1033 640,1040 530,1050 450,1059 395,1068 418,1074 390,1079 358,1085 410,1100 510,1106 650,1114 770,1121 830,1128 845,1136 820,1146 740,1154 570,1163 450,1170 428,1180 460,1193 475,1205 540,1213 555,1223 598,1240 608,1260 604,1268 650,1278 690,1290 730,1303 770,1312 850,1321 878,1330 850,1340 790,1351 760,1362 795,1375 842,1387 843,1395 890,1400 915,1409 912,1418 1000,1428 1065,1434 1076,1447 1078,1455 1140,1464 1212,1475 1212,1482 1205,1494 1197,1500 1212,1502 1262", B),
];

const NODES = [
  { x: 472, y: 476, core: "#4fd93c", rim: "#9cf08a" },
  { x: 595, y: 424, core: "#4a22f0", rim: "#a994fa" },
  { x: 801, y: 509, core: "#2c8fe6", rim: "#9acbf5" },
  { x: 1152, y: 440, core: "#fb1f1f", rim: "#ff9c94" },
  { x: 1401, y: 437, core: "#c22ae8", rim: "#e6a6f6" },
];

const FREQUENCIES = [10, 100, 1000, 10000].flatMap((d) => [1, 2, 3, 4, 5, 6, 7, 8, 9].map((n) => n * d)).filter((f) => f >= 20 && f <= 20000);
const freqX = (f: number) => 970.5 + 563.5 * Math.log10(f / 1000);

const Display = () => {
  const total = spline(totalPts);
  return (
    <Analyzer role="img" aria-label="Equaliser curve and spectrum">
      <defs>
        <linearGradient id="bg" x1="0" y1="0" x2="0" y2="1">
          <stop offset="0.05" stopColor="#120e13" />
          <stop offset="1" stopColor="#201b20" />
        </linearGradient>
        <linearGradient id="vfade" gradientUnits="userSpaceOnUse" x1="0" y1="10" x2="0" y2="110">
          <stop offset="0" stopColor="#fff" stopOpacity="0" />
          <stop offset="1" stopColor="#fff" stopOpacity="0.17" />
        </linearGradient>
        <linearGradient id="hfade" gradientUnits="userSpaceOnUse" x1="1600" y1="0" x2="1815" y2="0">
          <stop offset="0" stopColor="#fff" stopOpacity="0.24" />
          <stop offset="1" stopColor="#fff" stopOpacity="0" />
        </linearGradient>
        <linearGradient id="panel" x1="0" y1="0" x2="0" y2="1">
          <stop offset="0" stopColor="#020203" />
          <stop offset="1" stopColor="#15131a" />
        </linearGradient>
        <linearGradient id="middle" x1="0" y1="0" x2="1" y2="0">
          <stop offset="0" stopColor="#110d12" stopOpacity="0" />
          <stop offset="0.18" stopColor="#110d12" />
          <stop offset="0.5" stopColor="#110d12" />
          <stop offset="1" stopColor="#110d12" stopOpacity="0" />
        </linearGradient>
        <linearGradient id="plate" x1="0" y1="0" x2="0" y2="1">
          <stop offset="0" stopColor="#222024" />
          <stop offset="1" stopColor="#363438" />
        </linearGradient>
        <linearGradient id="edge" gradientUnits="userSpaceOnUse" x1="0" y1="0" x2="1892" y2="0">
          <stop offset="0.28" stopColor="#2c2a2f" />
          <stop offset="0.4" stopColor="#2c2a2f" stopOpacity="0" />
          <stop offset="0.6" stopColor="#2c2a2f" stopOpacity="0" />
          <stop offset="0.85" stopColor="#2c2c30" />
        </linearGradient>
        <linearGradient id="spec" gradientUnits="userSpaceOnUse" x1="0" y1="470" x2="0" y2="760">
          <stop offset="0" stopColor="#48424a" />
          <stop offset="1" stopColor="#3c373d" />
        </linearGradient>
        <linearGradient id="zero" gradientUnits="userSpaceOnUse" x1="0" y1="0" x2="1836" y2="0">
          <stop offset="0" stopColor="#a862a0" />
          <stop offset="0.28" stopColor="#c25f88" />
          <stop offset="0.5" stopColor="#86707a" />
          <stop offset="0.7" stopColor="#6d8fc0" />
          <stop offset="1" stopColor="#7a70b4" />
        </linearGradient>
        {NODES.map((n) => (
          <radialGradient key={n.x} id={`node${n.x}`}>
            <stop offset="0.15" stopColor={n.core} />
            <stop offset="1" stopColor={n.rim} />
          </radialGradient>
        ))}
      </defs>
      <rect width="100%" height="100%" fill="url(#bg)" />
      {SPECTRUM.map((pts, i) => (
        <g key={i}>
          <path d={spline(pts) + "Z"} fill="#322e34" />
          <path d={spline(pts) + "Z"} fill="url(#spec)" transform="translate(0 12)" />
        </g>
      ))}
      <path d={`M0 476L0 800L${total.slice(1)}L1836 476Z`} fill="#ffb52e" opacity={0.14} />
      {FREQUENCIES.map((f) => (
        <rect key={f} x={Math.round(freqX(f))} y={0} width={1} height="100%" fill="url(#vfade)" />
      ))}
      {[108, 200, 292, 384, 568, 660, 752].map((y) => (
        <rect key={y} x={0} y={y} width={1815} height={1} fill="url(#hfade)" />
      ))}
      {SPECTRUM.map((pts, i) => (
        <path key={i} d={spline(pts)} fill="none" stroke="#87848a" strokeWidth={1.5} opacity={0.8} />
      ))}
      {BANDS.map((b) => (
        <path key={b.color} d={spline(b.pts)} fill="none" stroke={b.color} strokeWidth={2} opacity={0.7} />
      ))}
      <rect y={475} width={1836} height={3} fill="url(#zero)" opacity={0.8} />
      <rect x={472} y={488} width={2} height={82} fill="#2f8a2c" />
      <path d={total} fill="none" stroke="#ffc440" strokeWidth={4.5} />
      {NODES.map((n) => (
        <circle key={n.x} cx={n.x} cy={n.y} r={11} fill={`url(#node${n.x})`} stroke="#0c0a10" strokeWidth={2} />
      ))}

      <path d="M535 56C548 63 558 65 575 65H1734C1778 65 1822 8 1870 8H1892V5H650C590 10 575 40 535 56Z" fill="url(#panel)" />
      <rect x={640} y={6} width={1100} height={58} fill="url(#middle)" opacity={0.8} />
      <path d="M535 56C548 63 558 65 575 65H1734C1778 65 1822 8 1870 8H1892" fill="none" stroke="url(#edge)" strokeWidth={1.5} />
      <path d="M0 0H1892V5H650C562 5 565 72 480 72C400 76 100 76 0 71Z" fill="url(#plate)" />
      <path d="M0 71C100 76 400 76 480 72C565 72 562 5 650 5H1892" fill="none" stroke="#47454a" strokeWidth={1.5} />
    </Analyzer>
  );
};

/* ---------- logo and icons ---------- */

const BITS: { x: number; y: number; o?: boolean; on?: boolean }[] = [
  { x: 3, y: 9 }, { x: 19, y: 9, o: true }, { x: 37, y: 9, on: true }, { x: 53, y: 9, o: true }, { x: 70, y: 9 },
  { x: 9, y: 29, o: true }, { x: 25, y: 29 }, { x: 37, y: 29, on: true }, { x: 48, y: 29 }, { x: 64, y: 29, o: true },
  { x: 3, y: 48 }, { x: 13, y: 48 }, { x: 30, y: 48, o: true, on: true }, { x: 53, y: 48, o: true }, { x: 70, y: 48 },
];

const BitLogo = () => (
  <svg width={72} height={57} aria-hidden>
    {BITS.map((b) => {
      const stroke = b.on ? "#fff" : "#6c6a6e";
      return b.o ? (
        <ellipse key={`${b.x}-${b.y}`} cx={b.x} cy={b.y} rx={7} ry={7.5} fill="none" stroke={stroke} strokeWidth={b.on ? 3.4 : 2.6} />
      ) : (
        <path key={`${b.x}-${b.y}`} d={`M${b.x} ${b.y - 8.5}V${b.y + 8.5}`} stroke={stroke} strokeWidth={b.on ? 3.6 : 3} />
      );
    })}
  </svg>
);

const TurnIcon = ({ flip }: { flip?: boolean }) => (
  <svg width={26} height={18} viewBox="0 0 26 18" aria-hidden>
    <g transform={flip ? "translate(26 0) scale(-1 1)" : undefined}>
      <path d="M1 3V13H12Z" fill="#77757a" />
      <path d="M5 10C9 3 15 1 20 4C25 7 24 12 22 16" fill="none" stroke="#77757a" strokeWidth={1.8} />
    </g>
  </svg>
);

const ArrowIcon = ({ right }: { right?: boolean }) => (
  <svg width={10} height={16} viewBox="0 0 10 16" aria-hidden>
    <path d={right ? "M0 0H2L10 8L2 16H0Z" : "M10 0H8L0 8L8 16H10Z"} fill="#fff" />
  </svg>
);

const ExpandIcon = () => (
  <svg width={22} height={22} viewBox="0 0 22 22" aria-hidden>
    <path d="M1 7V1H7M15 1H21V7M21 15V21H15M7 21H1V15" fill="none" stroke="#bab8bd" strokeWidth={2} />
  </svg>
);

/* ---------- meter ---------- */

const litColor = (i: number) => {
  const stops = [
    [195, 185, 50],
    [178, 184, 46],
    [146, 174, 42],
    [104, 150, 34],
  ];
  const t = Math.min(2.999, Math.max(0, ((i - 27) / 54) * 3));
  const k = Math.floor(t);
  const mix = stops[k].map((v, c) => Math.round(v + (stops[k + 1][c] - v) * (t - k)));
  return `rgb(${mix.join(",")})`;
};

const MeterColumn = ({ side, level, peak }: { side: "left" | "right"; level: number; peak: number }) => (
  <Column $side={side}>
    {Array.from({ length: 82 }, (_, i) => (
      <i key={i} style={{ background: i === peak ? "#d2c039" : i >= level ? litColor(i) : "#252127" }} />
    ))}
  </Column>
);

/* ---------- page ---------- */

export default function App() {
  return (
    <Desktop>
      <GlobalStyle />
      <Lane $height={36} $rule={5}>
        <Grid />
        <LocatorFlag width={17} height={9} aria-hidden>
          <path d="M0 0H17L8.500 9Z" fill="#12bccb" />
        </LocatorFlag>
      </Lane>
      <Lane $height={166} $rule={4}>
        <Grid />
        <Envelopes>
          <Envelope />
          <Envelope />
          <Envelope />
          <Envelope />
        </Envelopes>
      </Lane>
      {TRACKS.map((t) => (
        <TrackLane key={t.color} track={t} />
      ))}
      <Lane $height={42} $rule={4}>
        <Grid />
      </Lane>
      <Lane $height={336} $rule={7}>
        <Grid />
      </Lane>
      <Lane $height={41} $rule={5}>
        <Grid />
      </Lane>
      <Ruler>
        <RulerMark />
        <RulerMark label="4:00" />
        <RulerMark label="4:15" />
      </Ruler>
      <Gutter />
      <DropArea>Here</DropArea>
      <Playhead />

      <WindowShadow />
      <Window aria-label="FabFilter Pro-Q 3">
        <TitleBar>FabFilter Pro-Q 3/5-81 Vox</TitleBar>
        <Plugin>
          <Display />
          <Surface>
            <Toolbar>
              <Brand>
                <BitLogo />
                <Wordmark>
                  <MakerName>fabfilter</MakerName>
                  <MakerLine>software instruments</MakerLine>
                </Wordmark>
                <Product>
                  <ProductName>Pro</ProductName>
                  <ProductDot />
                  <ProductLetter>
                    Q<ProductVersion>3</ProductVersion>
                  </ProductLetter>
                </Product>
              </Brand>
              <button aria-label="Undo">
                <TurnIcon />
              </button>
              <button aria-label="Redo">
                <TurnIcon flip />
              </button>
              <Compare>
                <span>A/</span> B
              </Compare>
              <button>Copy</button>
              <Preset>
                <button aria-label="Previous preset">
                  <ArrowIcon />
                </button>
                <button>Default Setting</button>
                <button aria-label="Next preset">
                  <ArrowIcon right />
                </button>
              </Preset>
              <i />
              <Bright>Help</Bright>
              <button aria-label="Full screen">
                <ExpandIcon />
              </button>
            </Toolbar>
            <Scales>
              <GainScale>
                <RangeButton>12 dB</RangeButton>
                {["+9", "+6", "+3", "0", "–3", "–6", "–9"].map((l) => (
                  <GainLabel key={l}>{l}</GainLabel>
                ))}
              </GainScale>
              <LevelScale>
                {["0", "–10", "–20", "–30", "–40", "–50", "–60"].map((l) => (
                  <span key={l}>{l}</span>
                ))}
              </LevelScale>
              <Meter>
                <Readout>–9.8</Readout>
                <Columns>
                  <MeterColumn side="left" level={27} peak={19} />
                  <MeterColumn side="right" level={33} peak={21} />
                </Columns>
              </Meter>
            </Scales>
          </Surface>
        </Plugin>
      </Window>
    </Desktop>
  );
}
